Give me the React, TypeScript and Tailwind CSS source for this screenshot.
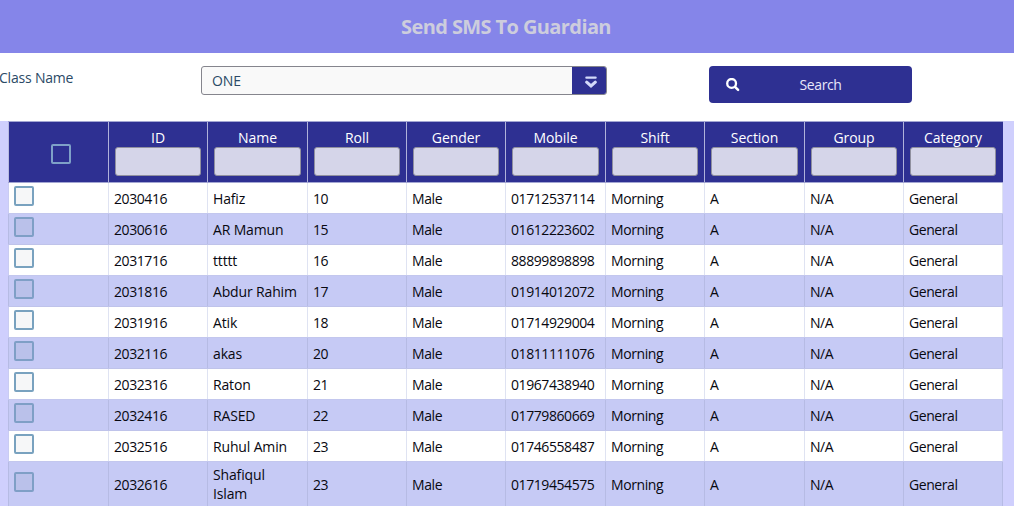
const columns = ['ID', 'Name', 'Roll', 'Gender', 'Mobile', 'Shift', 'Section', 'Group', 'Category'];

const students = [
  ['2030416', 'Hafiz', '10', '01712537114'],
  ['2030616', 'AR Mamun', '15', '01612223602'],
  ['2031716', 'ttttt', '16', '88899898898'],
  ['2031816', 'Abdur Rahim', '17', '01914012072'],
  ['2031916', 'Atik', '18', '01714929004'],
  ['2032116', 'akas', '20', '01811111076'],
  ['2032316', 'Raton', '21', '01967438940'],
  ['2032416', 'RASED', '22', '01779860669'],
  ['2032516', 'Ruhul Amin', '23', '01746558487'],
  ['2032616', 'Shafiqul Islam', '23', '01719454575'],
];

const grid = 'grid grid-cols-[101px_99px_100px_99px_99px_100px_99px_100px_99px_99px]';

function Row({ student, index }: { student: string[]; index: number }) {
  const [id, name, roll, mobile] = student;
  const cells = [id, name, roll, 'Male', mobile, 'Morning', 'A', 'N/A', 'General'];
  const odd = index % 2 === 1;
  const last = index === students.length - 1;
  return (
    <div className={`${grid} ${last ? 'h-[47px]' : 'h-[31px]'} border-b ${odd ? 'border-[#bfc3ea] bg-[#c6caf5]' : 'border-[#c3c7ee] bg-white'}`}>
      <div className={`flex border-x pl-[5px] ${last ? 'items-center pb-[6px]' : 'items-start pt-[3px]'} ${odd ? 'border-[#b6bbe4]' : 'border-l-[#c9ccf2] border-r-[#dfe3f2]'}`}>
        <span className={`size-5 rounded-[2px] border-2 ${odd ? 'border-[#7f9fc6] bg-[#bac1ea]' : 'border-[#79a2bf] bg-[#f6f7f8]'}`} />
      </div>
      {cells.map((cell, i) => (
        <div key={i} className={`flex items-center border-r pl-[5px] leading-[19px] ${last ? (i === 1 ? 'pb-[3px]' : 'pb-[1px]') : ''} ${i === 1 ? 'pr-[9px] tracking-[-0.15px]' : ''} ${odd ? 'border-[#b6bbe4]' : 'border-[#dfe3f2]'}`}>
          <span className={last && i === 1 ? 'w-[60px]' : 'whitespace-nowrap'}>{cell}</span>
        </div>
      ))}
    </div>
  );
}

export default function App() {
  return (
    <div className="h-[506px] w-[1017px] overflow-hidden bg-white font-['Open_Sans','Noto_Sans',sans-serif] text-[14px] tracking-[-0.42px] text-[#080810]">
      <div className="w-[1014px]">
        <header className="flex h-[53px] items-center justify-center bg-[#8585e9] pr-[2px]">
          <h1 className="text-[20px] font-bold leading-[27px] tracking-[-0.6px] text-[#cdcddd]">Send SMS To Guardian</h1>
        </header>
        <div className="flex h-[68px] items-start pt-[13px]">
          <label className="-ml-[1px] w-[202px] pt-[2px] leading-[20px] tracking-[-0.2px] text-[#2b4a66]">Class Name</label>
          <div className="flex h-[29px] w-[406px] overflow-hidden rounded-[3px] border border-[#85858d] bg-[#f9f9f9]">
            <span className="flex-1 pl-[10px] leading-[27px] font-medium tracking-[-0.15px] text-[#2b4a66]">ONE</span>
            <span className="flex w-[34px] items-center justify-center bg-[#2e3092] pl-[3px] pt-[3px]">
              <svg width="12" height="13" viewBox="0 0 12 13" fill="none" stroke="#d3d9fa">
                <path d="M1.4 1.7h9.2" strokeWidth="2.3" strokeLinecap="round" />
                <path d="M1.7 6.2 6 9.9l4.3-3.7" strokeWidth="3.1" strokeLinecap="round" />
              </svg>
            </span>
          </div>
          <button className="ml-[102px] flex h-[37px] w-[203px] items-center rounded-[4px] bg-[#2e3092] pl-[17px] pr-[33px] text-[#e8e8fa]">
            <svg width="14" height="14" viewBox="0 0 14 14" fill="none" stroke="white">
              <circle cx="5.6" cy="5.4" r="4.4" strokeWidth="2.3" />
              <path d="m9 8.8 3.1 3.1" strokeWidth="2.5" strokeLinecap="round" />
            </svg>
            <span className="flex-1 pl-[22px] text-center">Search</span>
          </button>
        </div>
        <main className="h-[385px] bg-[#cfcffd] pl-[8px]">
          <div className="w-[995px]">
            <div className={`${grid} h-[62px] border-y border-[#a3a6d3] bg-[#2e3092] text-white`}>
              <div className="flex items-center justify-center border-l border-r border-l-[#b8bae0] border-r-[#b0b2da] pl-[4px] pt-[4px]">
                <span className="size-5 rounded-[2px] border-2 border-[#7fa1c8]" />
              </div>
              {columns.map((column) => (
                <div key={column} className="flex flex-col items-center border-r border-[#b0b2da] px-[6px] pt-[6px] last:border-[#2e3092]">
                  <span className="z-10 h-[19px] leading-[19px] font-medium tracking-[-0.05px]">{column}</span>
                  <span className="h-[29px] w-full rounded-[3px] border border-[#90909f] bg-[#d5d5e9]" />
                </div>
              ))}
            </div>
            {students.map((student, index) => (
              <Row key={student[0]} student={student} index={index} />
            ))}
          </div>
        </main>
      </div>
    </div>
  );
}
